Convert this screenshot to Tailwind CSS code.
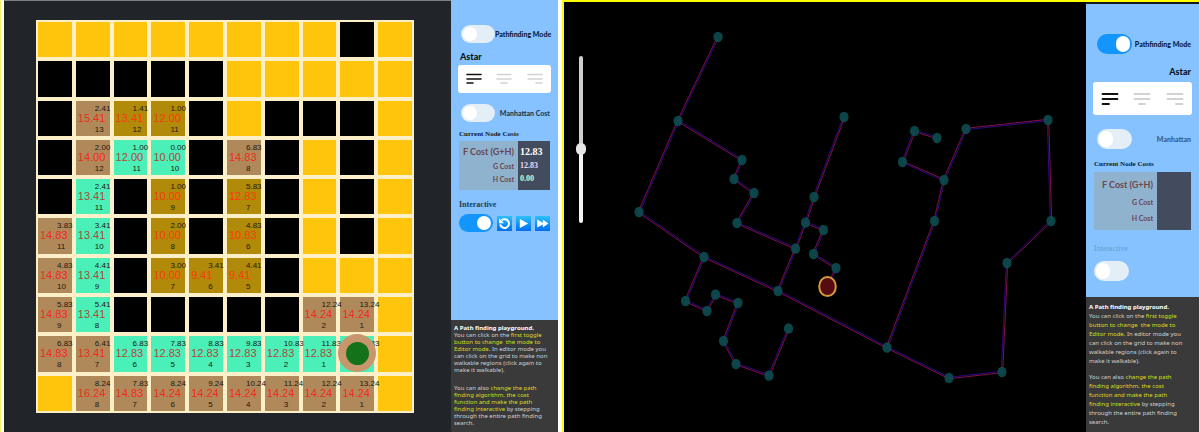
<!DOCTYPE html>
<html lang="en">
<head>
<meta charset="utf-8">
<title>Path finding playground</title>
<script src="https://cdn.jsdelivr.net/npm/@tailwindcss/browser@4"></script>
</head>
<body class="bg-white font-['Liberation_Sans',Arial,sans-serif]">
<main class="grid min-h-screen grid-cols-[564fr_636fr]">

  <!-- Grid playground -->
  <section class="flex border-l border-[#f4f46a] pr-[6px] pl-[3px]" aria-label="Grid playground">
    <div class="flex min-w-0 flex-1 border-t border-[#7b8083] bg-[#212529] pt-[19px] pr-[37px] pb-[19px] pl-8">
      <div id="board" class="grid flex-1 grid-cols-[repeat(10,minmax(0,1fr))] grid-rows-[repeat(10,minmax(0,1fr))] gap-1 bg-[#fdf0c8] p-0.5"></div>
    </div>
    <aside class="flex w-[107px] shrink-0 flex-col bg-[#85c2ff]">
      <div class="flex flex-col px-2 pt-[25px]">
        <label class="flex items-center justify-between pl-0.5 font-[Lato,sans-serif] text-[7px] leading-[18px] font-black whitespace-nowrap text-[#10202e]">
          <input type="checkbox" class="h-[18px] w-[34px] shrink-0 appearance-none rounded-full bg-[#e4eef6] p-0.5 before:block before:size-[14px] before:rounded-full before:bg-white checked:bg-[#1495fb] checked:before:ml-4">
          Pathfinding Mode
        </label>
        <h2 class="mt-2 pl-px font-[Lato,sans-serif] text-[9px] leading-3 font-black text-[#0a141e]">Astar</h2>
        <div class="-mx-px mt-0.5 flex h-7 items-center justify-around rounded-[3px] bg-white px-px" role="radiogroup" aria-label="Algorithm">
          <label class="text-[#111]"><input type="radio" name="algoA" aria-label="Astar" class="sr-only" checked><svg class="h-[12px] w-4" viewBox="0 0 16 12"><path d="M1 1.5H15M1 6H15M1 10H7" stroke="currentColor" stroke-width="1.6" stroke-linecap="round"/></svg></label>
          <label class="text-[#d2d2d2]"><input type="radio" name="algoA" aria-label="Dijkstra" class="sr-only"><svg class="h-[12px] w-4" viewBox="0 0 16 12"><path d="M1 1.5H15M1 6H15M5 10H11" stroke="currentColor" stroke-width="1.6" stroke-linecap="round"/></svg></label>
          <label class="text-[#d2d2d2]"><input type="radio" name="algoA" aria-label="Greedy" class="sr-only"><svg class="h-[12px] w-4" viewBox="0 0 16 12"><path d="M1 1.5H15M1 6H15M9 10H15" stroke="currentColor" stroke-width="1.6" stroke-linecap="round"/></svg></label>
        </div>
        <label class="mt-[11px] flex items-center justify-between pl-0.5 font-[Lato,sans-serif] text-[7px] leading-[18px] font-black whitespace-nowrap text-[#1c3d5a]">
          <input type="checkbox" class="h-[18px] w-[34px] shrink-0 appearance-none rounded-full bg-[#e4eef6] p-0.5 before:block before:size-[14px] before:rounded-full before:bg-white checked:bg-[#1495fb] checked:before:ml-4">
          Manhattan Cost
        </label>
        <h2 class="mt-[6px] font-['Liberation_Serif',serif] text-[7px] leading-3 font-bold whitespace-nowrap text-[#10202e]">Current Node Costs</h2>
        <table class="mt-px w-full border-collapse font-[Lato,sans-serif] font-black whitespace-nowrap">
          <tr class="h-[18px]"><th class="w-[59px] bg-[#8fb2cf] pt-1 pr-1 pb-0 text-right text-[9px] leading-3 text-[#6a4750]">F Cost (G+H)</th><td class="bg-[#434c5e] pt-1 pb-0 pl-0.5 font-['Liberation_Serif',serif] text-[10px] leading-3 font-bold text-white">12.83</td></tr>
          <tr class="h-[13px]"><th class="bg-[#8fb2cf] p-0 pr-1 text-right text-[7px] leading-3 text-[#6a4750]">G Cost</th><td class="bg-[#434c5e] p-0 pl-0.5 font-['Liberation_Serif',serif] text-[8px] leading-3 font-bold text-[#f3d9ec]">12.83</td></tr>
          <tr class="h-[18px]"><th class="bg-[#8fb2cf] p-0 pr-1 pb-1 text-right text-[7px] leading-3 text-[#6a4750]">H Cost</th><td class="bg-[#434c5e] p-0 pb-1 pl-0.5 font-['Liberation_Serif',serif] text-[8px] leading-3 font-bold text-[#dff5c4]">0.00</td></tr>
        </table>
        <label for="interA" class="mt-[9px] font-['Liberation_Serif',serif] text-[8px] leading-3 font-bold text-[#1c3d5a]">Interactive</label>
        <div class="mt-[3px] flex items-center justify-between">
          <input id="interA" type="checkbox" checked class="h-[18px] w-[34px] shrink-0 appearance-none rounded-full bg-[#e4eef6] p-0.5 before:block before:size-[14px] before:rounded-full before:bg-white checked:bg-[#1495fb] checked:before:ml-4">
          <div class="flex gap-1">
            <button aria-label="Reset" class="size-[15px] bg-linear-to-b from-[#2fc0f8] to-[#0a6cf2]"><svg viewBox="0 0 15 15"><path d="M4.6 4.3A4.4 4.4 0 1 1 3.2 8.4" fill="none" stroke="#fff" stroke-width="2"/><path d="M2 2.2V7.2H7Z" fill="#fff"/></svg></button>
            <button aria-label="Step" class="size-[15px] bg-linear-to-b from-[#2fc0f8] to-[#0a6cf2]"><svg viewBox="0 0 15 15"><path d="M3.8 3V12L12.2 7.5Z" fill="#fff"/></svg></button>
            <button aria-label="Fast forward" class="size-[15px] bg-linear-to-b from-[#2fc0f8] to-[#0a6cf2]"><svg viewBox="0 0 15 15"><path d="M2.2 3.6V11.6L7.8 8.4V11.6L13.4 7.6L7.8 3.6V6.8Z" fill="#fff"/></svg></button>
          </div>
        </div>
      </div>
      <div class="mt-auto bg-[#3a3a3a] px-[3px] pt-1 pb-[5px] font-['Noto_Sans',sans-serif] text-[6px] leading-[7px] whitespace-nowrap text-[#d0d0d0]">
        <h3 class="leading-[8px] font-bold text-white">A Path finding playground.</h3>
        <p>You can click on the <span class="text-[#d8dc1e]">first toggle<br>button to change&nbsp; the mode to<br>Editor mode.</span> In editor mode you<br>can click on the grid to make non<br>walkable regions (click again to<br>make it walkable).</p>
        <p class="mt-[11px]">You can also <span class="text-[#d8dc1e]">change the path<br>finding algorithm, the cost<br>function and make the path<br>finding interactive</span> by stepping<br>through the entire path finding<br>search.</p>
      </div>
    </aside>
  </section>

  <!-- Graph playground -->
  <section class="-ml-0.5 flex border-t-2 border-r border-l-2 border-y-[#ffff00] border-r-[#e8ec80] border-l-[#ffff00]" aria-label="Graph playground">
    <div class="relative min-w-0 flex-1 bg-black">
      <svg id="graph" class="absolute inset-0 size-full" viewBox="564 2 522 430" role="img" aria-label="Node graph"></svg>
      <input type="range" min="0" max="100" value="56" aria-label="Zoom" class="absolute top-[54px] left-[11px] h-[167px] w-[11px] appearance-none bg-transparent [writing-mode:vertical-lr] [&::-webkit-slider-runnable-track]:w-1 [&::-webkit-slider-runnable-track]:rounded-full [&::-webkit-slider-runnable-track]:bg-linear-to-b [&::-webkit-slider-runnable-track]:from-[#cfcfcf] [&::-webkit-slider-runnable-track]:from-55% [&::-webkit-slider-runnable-track]:to-[#f4f4f4] [&::-webkit-slider-runnable-track]:to-55% [&::-webkit-slider-thumb]:-ml-[3px] [&::-webkit-slider-thumb]:h-3 [&::-webkit-slider-thumb]:w-[10px] [&::-webkit-slider-thumb]:appearance-none [&::-webkit-slider-thumb]:rounded-full [&::-webkit-slider-thumb]:bg-[#e6e6e6]">
    </div>
    <aside class="flex w-[113px] shrink-0 flex-col border-t-2 border-[#15181c] bg-[#85c2ff]">
      <div class="flex flex-col px-2 pt-[30px]">
        <label class="flex items-center justify-between pl-[3px] font-[Lato,sans-serif] text-[7px] leading-5 font-black whitespace-nowrap text-[#10202e]">
          <input type="checkbox" checked class="h-5 w-[35px] shrink-0 appearance-none rounded-full bg-[#e4eef6] p-0.5 before:block before:h-4 before:w-[14px] before:rounded-full before:bg-white checked:bg-[#1495fb] checked:before:ml-[17px]">
          Pathfinding Mode
        </label>
        <h2 class="mt-3 text-right font-[Lato,sans-serif] text-[9px] leading-3 font-black text-[#0a141e]">Astar</h2>
        <div class="-mx-px mt-1 flex h-[33px] items-center justify-around rounded-[3px] bg-white px-px" role="radiogroup" aria-label="Algorithm">
          <label class="text-[#111]"><input type="radio" name="algoB" aria-label="Astar" class="sr-only" checked><svg class="h-[14px] w-[18px]" viewBox="0 0 18 14"><path d="M1.5 2H16.5M1.5 7H16.5M1.5 12H8" stroke="currentColor" stroke-width="1.8" stroke-linecap="round"/></svg></label>
          <label class="text-[#d2d2d2]"><input type="radio" name="algoB" aria-label="Dijkstra" class="sr-only"><svg class="h-[14px] w-[18px]" viewBox="0 0 18 14"><path d="M1.5 2H16.5M1.5 7H16.5M6 12H12" stroke="currentColor" stroke-width="1.8" stroke-linecap="round"/></svg></label>
          <label class="text-[#d2d2d2]"><input type="radio" name="algoB" aria-label="Greedy" class="sr-only"><svg class="h-[14px] w-[18px]" viewBox="0 0 18 14"><path d="M1.5 2H16.5M1.5 7H16.5M10 12H16.5" stroke="currentColor" stroke-width="1.8" stroke-linecap="round"/></svg></label>
        </div>
        <label class="mt-[14px] flex items-center justify-between pl-[3px] font-[Lato,sans-serif] text-[7px] leading-5 font-black whitespace-nowrap text-[#3a5f80]">
          <input type="checkbox" class="h-5 w-[35px] shrink-0 appearance-none rounded-full bg-[#e4eef6] p-0.5 before:block before:h-4 before:w-[14px] before:rounded-full before:bg-white checked:bg-[#1495fb] checked:before:ml-[17px]">
          Manhattan
        </label>
        <h2 class="mt-2 font-['Liberation_Serif',serif] text-[7px] leading-[14px] font-bold whitespace-nowrap text-[#10202e]">Current Node Costs</h2>
        <table class="mt-px w-full border-collapse font-[Lato,sans-serif] font-black whitespace-nowrap">
          <tr class="h-[22px]"><th class="w-[63px] bg-[#8fb2cf] pt-1 pr-1 pb-0 text-right text-[9px] leading-3 text-[#6a4750]">F Cost (G+H)</th><td class="bg-[#434c5e]"></td></tr>
          <tr class="h-4"><th class="bg-[#8fb2cf] p-0 pr-1 text-right text-[7px] leading-3 text-[#6a4750]">G Cost</th><td class="bg-[#434c5e]"></td></tr>
          <tr class="h-5"><th class="bg-[#8fb2cf] p-0 pr-1 pb-1 text-right text-[7px] leading-3 text-[#6a4750]">H Cost</th><td class="bg-[#434c5e]"></td></tr>
        </table>
        <label for="interB" class="mt-3 font-['Liberation_Serif',serif] text-[8px] leading-[14px] text-[#6a9ccc]">Interactive</label>
        <input id="interB" type="checkbox" class="mt-[5px] h-5 w-[35px] shrink-0 appearance-none rounded-full bg-[#e4eef6] p-0.5 before:block before:h-4 before:w-[14px] before:rounded-full before:bg-white checked:bg-[#1495fb] checked:before:ml-[17px]">
      </div>
      <div class="mt-auto bg-[#3a3a3a] px-[3px] pt-[6px] pb-[5px] font-['Noto_Sans',sans-serif] text-[6px] leading-[9px] whitespace-nowrap text-[#d0d0d0]">
        <h3 class="font-bold text-white">A Path finding playground.</h3>
        <p>You can click on the <span class="text-[#d8dc1e]">first toggle<br>button to change&nbsp; the mode to<br>Editor mode.</span> In editor mode you<br>can click on the grid to make non<br>walkable regions (click again to<br>make it walkable).</p>
        <p class="mt-[7px]">You can also <span class="text-[#d8dc1e]">change the path<br>finding algorithm, the cost<br>function and make the path<br>finding interactive</span> by stepping<br>through the entire path finding<br>search.</p>
      </div>
    </aside>
  </section>
</main>

<script>
// Cell codes: y open, k wall; b / d / g carry "G F H" costs.
const rows = [
  'y|y|y|y|y|y|y|y|k|y',
  'k|k|k|k|k|y|y|y|y|y',
  'k|b 2.41 15.41 13|d 1.41 13.41 12|d 1.00 12.00 11|k|y|k|k|k|y',
  'k|b 2.00 14.00 12|g 1.00 12.00 11|g 0.00 10.00 10|k|b 6.83 14.83 8|k|y|k|y',
  'k|g 2.41 13.41 11|k|d 1.00 10.00 9|k|d 5.83 12.83 7|k|y|k|y',
  'b 3.83 14.83 11|g 3.41 13.41 10|k|d 2.00 10.00 8|k|d 4.83 10.83 6|k|y|k|y',
  'b 4.83 14.83 10|g 4.41 13.41 9|k|d 3.00 10.00 7|d 3.41 9.41 6|d 4.41 9.41 5|k|y|y|y',
  'b 5.83 14.83 9|g 5.41 13.41 8|k|k|k|k|k|b 12.24 14.24 2|b 13.24 14.24 1|y',
  'b 6.83 14.83 8|b 6.41 13.41 7|g 6.83 12.83 6|g 7.83 12.83 5|g 8.83 12.83 4|g 9.83 12.83 3|g 10.83 12.83 2|g 11.83 12.83 1|g 12.83 goal|y',
  'y|b 8.24 16.24 8|b 7.83 14.83 7|b 8.24 14.24 6|b 9.24 14.24 5|b 10.24 14.24 4|b 11.24 14.24 3|b 12.24 14.24 2|b 13.24 14.24 1|y'
];
const cellClass = { y: 'bg-[#ffc40c]', k: 'bg-black', b: 'bg-[#b0895a]', d: 'bg-[#b08a08]', g: 'bg-[#4bf0b8]' };
const totalClass = { b: 'text-[#f22a20]', d: 'text-[#fa3c0c]', g: 'text-[#b0483c]' };
document.getElementById('board').innerHTML = rows.flatMap(r => r.split('|')).map(c => {
  const [k, g, f, h] = c.split(' ');
  if (!g) return `<div class="${cellClass[k]}"></div>`;
  const top = `<div class="relative z-10 pl-[19px] text-[8px] leading-[8px] text-[#1c1810]">${g}</div>`;
  if (f === 'goal') return `<div class="relative pt-1 ${cellClass[k]}">${top}<div class="absolute -top-0.5 -left-0.5 z-20 flex size-[38px] items-center justify-center rounded-full bg-[#c8966c]"><div class="size-[23px] rounded-full bg-[#14731a]"></div></div></div>`;
  return `<div class="pt-1 ${cellClass[k]}">${top}<div class="pl-0.5 text-[11px] leading-[10px] ${totalClass[k]}">${f}</div><div class="pl-[19px] text-[8px] leading-[13px] text-[#1c1810]">${h}</div></div>`;
}).join('');

const N = { A:[718,37],B:[678,121],C:[742,160],D:[734,179],E:[754,193],F:[639,212],V:[737,223],W:[795.5,248.5],X:[805.5,222.5],H:[814,197],J:[844,117],T:[823.5,230],Y:[813.5,254],U:[836,268],K:[914.5,131],L:[937,138],M:[902.5,162],N:[944,180],O:[966,129],P:[1048,120],Q:[1051,221],R:[1007,263],S:[934.5,221],Z:[704,257],a:[778,291],b:[685.5,301],c:[707,311],d:[715.5,294.5],e:[738,303],f:[723.5,341],g:[736,364],h:[769,375.5],i:[788.5,328.5],j:[887,347.5],k:[949,378],l:[1002,372] };
const E = 'AB BC CD DE EV VW WX XH HJ XT TY YU Wa BF FZ Za aj jk kl lR RQ QP PO ON NM MK KL NS Sj Zb bc cd de ef fg gh hi'.split(' ');
const line = (p, q, o, s) => {
  const dx = q[0] - p[0], dy = q[1] - p[1], n = Math.hypot(dx, dy), x = -dy / n * o, y = dx / n * o;
  return `<line x1="${p[0] + x}" y1="${p[1] + y}" x2="${q[0] + x}" y2="${q[1] + y}" stroke="${s}" stroke-width="1"/>`;
};
let s = '';
for (const e of [...E.map(e => [N[e[0]], N[e[1]]]), [N.U, [828, 286]]]) s += line(e[0], e[1], -0.7, '#2c0a80') + line(e[0], e[1], 0.7, '#80104a');
for (const k in N) s += `<ellipse cx="${N[k][0]}" cy="${N[k][1]}" rx="4.6" ry="5.3" fill="#0c4c50" fill-opacity=".9"/>`;
s += '<ellipse cx="827.5" cy="286.5" rx="8.3" ry="9.6" fill="#560a12" stroke="#d6983c" stroke-width="2"/>';
document.getElementById('graph').innerHTML = s;
</script>
</body>
</html>
